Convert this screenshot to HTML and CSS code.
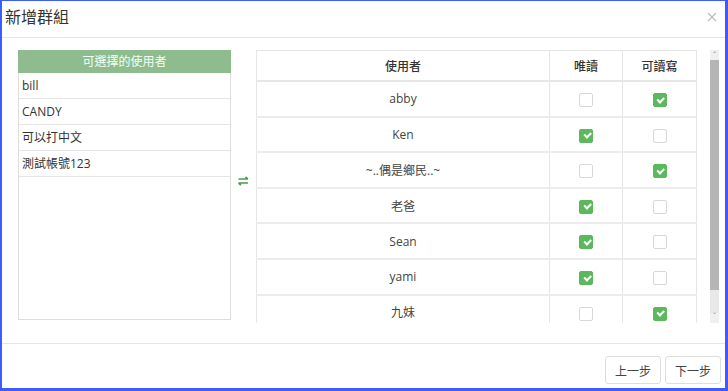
FILE: index.html
```html
<!DOCTYPE html>
<html lang="zh-Hant">
<head>
	<meta charset="UTF-8">
	<title>新增群組</title>
	<link rel="stylesheet" href="styles.css">
</head>
<body>
	<div class="modal">
		<div class="modal-header">
			<span class="title">新增群組</span>
			<svg class="close" width="10" height="10" viewBox="0 0 10 10"><path d="M1 1L9 9M9 1L1 9" stroke="#bbb" stroke-width="1.2"/></svg>
		</div>
		<div class="modal-body">
			<div class="pool">
				<div class="pool-head">可選擇的使用者</div>
				<div class="pool-item">bill</div>
				<div class="pool-item">CANDY</div>
				<div class="pool-item">可以打中文</div>
				<div class="pool-item">測試帳號123</div>
			</div>
			<div class="swap">
				<svg width="11" height="10" viewBox="0 0 11 10"><path d="M0.5 3H10M7.5 0.8L10 3M0.5 7H10M3 9.2L0.5 7" stroke="#4f9a4f" stroke-width="1.6" fill="none"/></svg>
			</div>
			<div class="grid-wrap">
				<table class="grid">
					<thead>
						<tr><th class="c-user">使用者</th><th class="c-ro">唯讀</th><th class="c-rw">可讀寫</th></tr>
					</thead>
					<tbody>
						<tr><td>abby</td><td><span class="cb"></span></td><td><span class="cb on"></span></td></tr>
						<tr><td>Ken</td><td><span class="cb on"></span></td><td><span class="cb"></span></td></tr>
						<tr><td>~..偶是鄉民..~</td><td><span class="cb"></span></td><td><span class="cb on"></span></td></tr>
						<tr><td>老爸</td><td><span class="cb on"></span></td><td><span class="cb"></span></td></tr>
						<tr><td>Sean</td><td><span class="cb on"></span></td><td><span class="cb"></span></td></tr>
						<tr><td>yami</td><td><span class="cb on"></span></td><td><span class="cb"></span></td></tr>
						<tr><td>九妹</td><td><span class="cb"></span></td><td><span class="cb on"></span></td></tr>
					</tbody>
				</table>
			</div>
			<div class="scrollbar">
				<div class="sb-arrow">&#710;</div>
				<div class="sb-thumb"></div>
				<div class="sb-track"></div>
				<div class="sb-arrow down">&#711;</div>
			</div>
		</div>
		<div class="modal-footer">
			<button class="btn">上一步</button>
			<button class="btn">下一步</button>
		</div>
	</div>
</body>
</html>
```

FILE: styles.css
```css
html, body {
	margin: 0;
	padding: 0;
	background: #fff;
}
body {
	font-family: "Open Sans", "Noto Sans CJK TC", sans-serif;
	font-size: 12px;
	color: #333;
}
.modal {
	box-sizing: border-box;
	width: 728px;
	height: 391px;
	border-style: solid;
	border-color: #3d5cff;
	border-width: 1px 3px 3px 2px;
	display: flex;
	flex-direction: column;
}
.modal-header {
	border-bottom: 1px solid #e5e5e5;
	display: flex;
	align-items: center;
	justify-content: space-between;
	padding: 0 8px 6px 3px;
	height: 30px;
}
.title {
	font-size: 16px;
	color: #333;
	font-family: "Noto Sans CJK TC", sans-serif;
}
.close {
	margin-top: 2px;
}
.modal-body {
	display: flex;
	padding: 12px 6px 20px 16px;
	height: 273px;
}
.pool {
	box-sizing: border-box;
	width: 213px;
	height: 270px;
	border: 1px solid #ddd;
}
.pool-head {
	height: 23px;
	line-height: 23px;
	background: #8fbc8f;
	color: #f4fff4;
	text-align: center;
	margin: -1px -1px 0;
}
.pool-item {
	height: 25px;
	line-height: 25px;
	padding-left: 3px;
	border-bottom: 1px solid #e5e5e5;
	color: #333;
}
.swap {
	width: 25px;
	display: flex;
	align-items: center;
	justify-content: center;
	height: 262px;
}
.grid-wrap {
	width: 441px;
	height: 273px;
	overflow: hidden;
}
.grid {
	width: 441px;
	border-collapse: collapse;
	border: 1px solid #e6e6e6;
}
.grid th {
	height: 29px;
	font-weight: 500;
	color: #333;
	border-left: 1px solid #e6e6e6;
	border-bottom: 2px solid #e6e6e6;
	padding: 0;
	font-family: "Noto Sans CJK TC", sans-serif;
}
.grid td {
	height: 33.6px;
	text-align: center;
	border-left: 1px solid #e6e6e6;
	border-bottom: 2px solid #ececec;
	padding: 0;
	color: #444;
}
.c-user {
	width: 292px;
}
.c-ro {
	width: 72px;
}
.cb {
	display: inline-block;
	box-sizing: border-box;
	width: 14px;
	height: 14px;
	border: 1px solid #d8d8d8;
	border-radius: 2px;
	vertical-align: middle;
	position: relative;
}
.cb.on {
	background: #5cb85c;
	border-color: #5cb85c;
}
.cb.on::after {
	content: "";
	position: absolute;
	left: 3.5px;
	top: 2.5px;
	width: 5px;
	height: 2.5px;
	border-left: 2px solid #fff;
	border-bottom: 2px solid #fff;
	transform: rotate(-45deg);
}
.scrollbar {
	width: 9px;
	height: 273px;
	margin-left: 13px;
	display: flex;
	flex-direction: column;
	background: #e8e8e8;
}
.sb-arrow {
	height: 10px;
	font-size: 9px;
	line-height: 12px;
	text-align: center;
	color: #999;
	background: #f0f0f0;
}
.sb-arrow.down {
	line-height: 8px;
}
.sb-thumb {
	height: 230px;
	background: #b5b5b5;
}
.sb-track {
	flex: 1;
}
.modal-footer {
	border-top: 1px solid #e5e5e5;
	display: flex;
	justify-content: flex-end;
	gap: 4px;
	padding: 12px 4px 0 0;
	flex: 1;
}
.btn {
	width: 56px;
	height: 28px;
	background: #fff;
	border: 1px solid #ddd;
	border-radius: 3px;
	font-family: "Noto Sans CJK TC", sans-serif;
	font-size: 12px;
	color: #444;
	padding: 0;
}
```
